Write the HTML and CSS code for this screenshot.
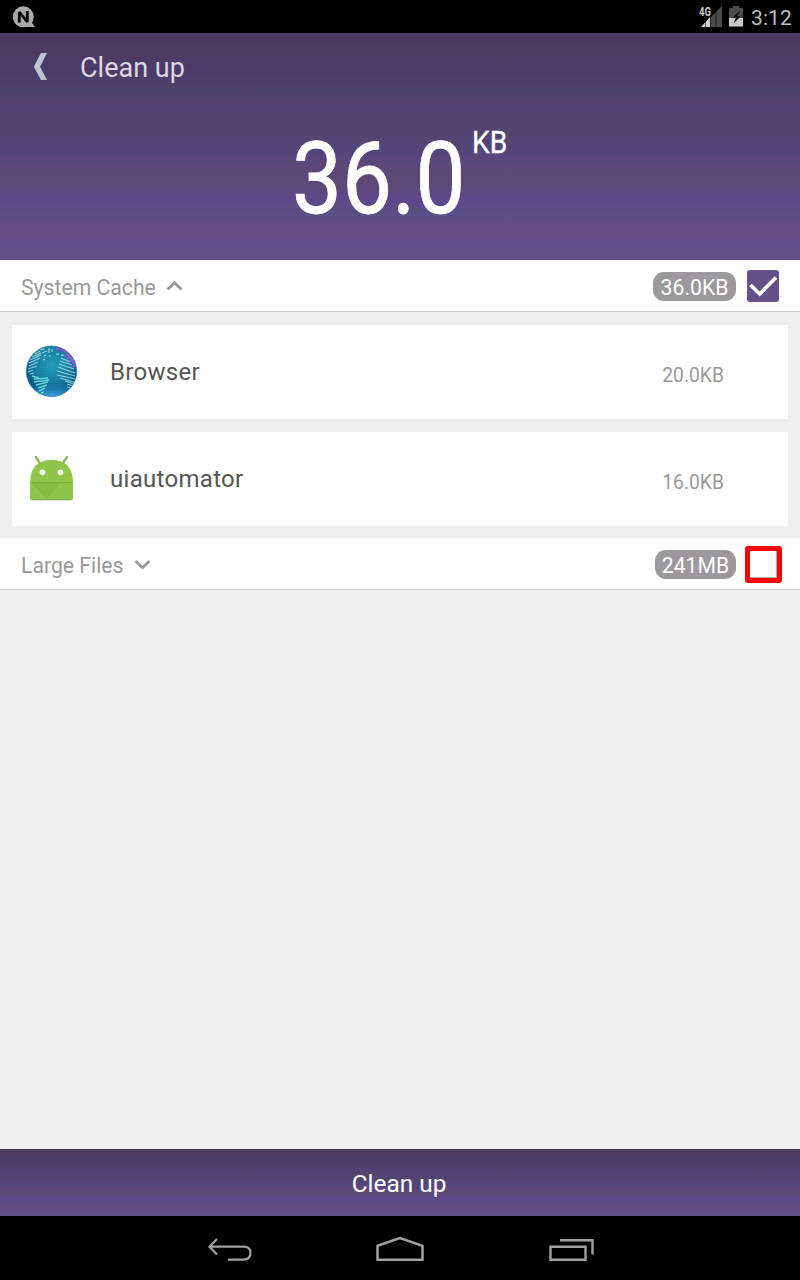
FILE: index.html
```html
<!DOCTYPE html>
<html lang="en">
<head>
<meta charset="utf-8">
<title>Clean up</title>
<link rel="stylesheet" href="styles.css">
</head>
<body>
<div class="screen">
  <div class="status">
    <svg class="notify" width="24" height="24" viewBox="0 0 24 24"><circle cx="11.300" cy="10.800" r="10.500" fill="#aaa"/><path d="M19 15.500l4 5.500H11z" fill="#aaa"/><path d="M7.300 16.500V6L15.300 16V5" fill="none" stroke="#000" stroke-width="2.800" stroke-linejoin="bevel"/></svg>
    <div class="status-right">
      <svg width="24" height="22" viewBox="0 0 24 22"><path d="M23 0v21h-21z" fill="#4b4d4b"/><path d="M11 11v10H2z" fill="#d0d0d0"/><path d="M6.500 12v9M11.500 8v13M17 4v17" stroke="#000" stroke-width=".6"/><path d="M0 0h13v10H0z" fill="#000"/><text class="net" x="0" y="10" textLength="12" lengthAdjust="spacingAndGlyphs">4G</text></svg>
      <svg class="battery" width="14" height="22" viewBox="0 0 14 22"><path d="M4 0h6v2h4v10H0V2h4z" fill="#4b4d4b"/><path d="M0 12h14v8.500H0z" fill="#c8c8c8"/><path d="M11.500 4L3.500 11.500h3.500L4.500 17.500 12 10H8.500z" fill="#111"/></svg>
      <span class="clock">3:12</span>
    </div>
  </div>
  <header class="header">
    <div class="title-bar">
      <svg width="14" height="28" viewBox="0 0 14 28"><path d="M8 0h6L7 13.700 14 27H8L.8 13.700z" fill="#bac5cd"/></svg>
      <h1 class="title">Clean up</h1>
    </div>
    <div class="total"><span class="amount">36.0</span><span class="unit">KB</span></div>
  </header>
  <section class="group">
    <span class="group-name">System Cache</span>
    <svg class="chevron" width="17" height="11" viewBox="0 0 17 11"><path d="M1.500 9.500L8.500 2.700 15.500 9.500" fill="none" stroke="#999" stroke-width="2.800"/></svg>
    <span class="badge badge-cache">36.0KB</span>
    <span class="check"><svg width="32" height="32" viewBox="0 0 32 32"><path d="M3.500 15L12.700 24 29 7.500" fill="none" stroke="#fff" stroke-width="3.600"/></svg></span>
  </section>
  <div class="items">
    <div class="item">
      <svg width="54" height="54" viewBox="0 0 54 54">
        <defs>
          <radialGradient id="globe" cx=".5" cy=".36" r=".64"><stop offset="0" stop-color="#269bb5"/><stop offset=".5" stop-color="#187ba1"/><stop offset=".82" stop-color="#09527d"/><stop offset="1" stop-color="#0b648f"/></radialGradient>
          <linearGradient id="shine" x1="0" y1="0" x2="0" y2="1"><stop offset=".72" stop-color="#2899d5" stop-opacity="0"/><stop offset=".95" stop-color="#39a9e4"/></linearGradient>
          <pattern id="dots" width="3" height="3" patternUnits="userSpaceOnUse"><circle cx="1" cy="1" r=".6" fill="#55b6d4" opacity=".35"/></pattern>
          <clipPath id="round"><circle cx="26.500" cy="26.300" r="25.200"/></clipPath>
        </defs>
        <g clip-path="url(#round)">
          <path d="M0 0h54v54H0z" fill="url(#globe)"/><path d="M0 35Q27 60 54 35L51 43Q27 60 5 43z" fill="#063b67" opacity=".6"/><path d="M0 0h54v54H0z" fill="url(#dots)"/><path d="M0 0h54v54H0z" fill="url(#shine)"/>
          <g fill="none" stroke="#a6dce9" stroke-width="1.250" opacity=".85"><path d="M10 9l5-3M7 12l9-4M5 15l11-5M4 18l11-5M4 21l9-4M3 24l9-3M3 27l5-2M5 29l4-1M15 5l5-1M17 8l5-2M19 11l2-1M24 3v5M27 4v3M25 10v2M18 15l2-1"/><path d="M36 13l9 4M35 16l12 4M34 19l15 5M33 22l17 6M32 26l18 5M32 30l18 4M35 33l14 4M40 36l9 3M42 39l6 2M42 42l4 1M31 9h3M36 10h3"/></g>
          <g fill="none" stroke="#65d4cf" stroke-width="1.400"><path d="M7 31l7 2M9 34l14-1M9 37l15-2M11 40l12-3M13 43l9-3M14 46l6-3M16 48l3-1"/></g>
          <path d="M31 3Q49 6 51 22" fill="none" stroke="#9349d5" stroke-width="3" opacity=".85"/><path d="M39 10l5 4M42 9l6 7M44 15l6 4M45 20l6 2" stroke="#9b61df" stroke-width="1.200"/>
        </g><circle cx="26.500" cy="26.300" r="25.200" fill="none" stroke="#287fae" stroke-width=".8"/>
      </svg>
      <span class="item-name">Browser</span><span class="size">20.0KB</span>
    </div>
    <div class="item">
      <svg width="54" height="54" viewBox="0 0 54 54"><path d="M10.800 5l4 6M42 5l-4 6" stroke="#89b35c" stroke-width="2.300" stroke-linecap="round"/><path d="M5.200 31Q5 8 26.500 8T48 31v14.500q0 2.500-2.500 2.500h-38q-2.500 0-2.500-2.500z" fill="#8fc549"/><path d="M5.500 30.500h42.300" stroke="#7dae40" stroke-width="1"/><path d="M6 31L22 47 36 31z" fill="#83b944" opacity=".7"/><path d="M5.500 47Q6 47.800 8 47.800h37q2 0 2.500-.8" fill="none" stroke="#79a546" stroke-width=".8"/><circle cx="17.500" cy="20.300" r="2.800" fill="#fff"/><circle cx="35.500" cy="20.300" r="2.800" fill="#fff"/></svg>
      <span class="item-name">uiautomator</span><span class="size">16.0KB</span>
    </div>
  </div>
  <section class="group">
    <span class="group-name">Large Files</span>
    <svg class="chevron" width="17" height="11" viewBox="0 0 17 11"><path d="M1.500 3L8.500 9.700 15.500 3" fill="none" stroke="#999" stroke-width="2.800"/></svg>
    <span class="badge badge-large">241MB</span>
    <span class="empty-check"></span>
  </section>
  <main class="blank"></main>
  <div class="action"><span class="action-text">Clean up</span></div>
  <nav class="nav">
    <svg width="46" height="28" viewBox="0 0 46 28" fill="none" stroke="#a0a0a0" stroke-width="2.300"><path d="M10 3L2.500 10.700 10 18.500M2.500 10.700h34q7 0 7 6.400t-7 6.500H21"/></svg>
    <svg width="50" height="28" viewBox="0 0 50 28" fill="none" stroke="#a0a0a0" stroke-width="2.500"><path d="M2.500 9.800L25 2.100 47.500 9.800v13.900h-45z"/></svg>
    <svg width="48" height="28" viewBox="0 0 48 28" fill="none" stroke="#a0a0a0" stroke-width="2.400"><path d="M3.500 10.700h35v13h-35zM13 4.200h32.500V18.500"/></svg>
  </nav>
</div>
</body>
</html>
```
FILE: styles.css
```css
* { box-sizing: border-box; }
body { margin: 0; font-family: Roboto, "Noto Sans", sans-serif; background: #eee; }
svg { display: block; flex: none; }
.screen { width: 800px; height: 1280px; display: flex; flex-direction: column; overflow: hidden; }
.status { height: 33px; background: #000; display: flex; padding: 6px 8px 0 12px; flex: none; }
.status-right { margin-left: auto; display: flex; }
.battery { margin-left: 6px; }
.clock { color: #bebebe; font-size: 21px; line-height: 24px; width: 41px; margin-left: 8px; letter-spacing: .1px; }
.net { font-size: 12px; font-weight: 700; fill: #c8c8c8; }
.header, .action { background: linear-gradient(#49395f, #4e3b62 8%, #4b3b6a 16%, #4b426b 25%, #554072 32%, #51456f 43%, #53467b 52%, #5e4778 59%, #5a4a77 67%, #5d4889 73%, #594e85 80%, #664c84 86%, #644c8d 92%, #64518a); flex: none; }
.header { height: 227px; }
.title-bar { display: flex; height: 68px; padding: 20px 0 0 33px; }
.title { margin: 0 0 0 33px; font-size: 27px; line-height: 30px; font-weight: 400; color: #dcd7e2; }
.total { display: flex; color: #fff; padding-left: 292px; height: 140px; }
.amount { font-size: 100px; line-height: 118px; width: 180px; padding-top: 19px; transform: scaleX(.89); transform-origin: left; -webkit-text-stroke: .8px #fff; }
.unit { font-size: 31px; line-height: 36px; padding-top: 24px; transform: scaleX(.91); transform-origin: left; -webkit-text-stroke: .3px #fff; }
.group { height: 52px; background: #fff; display: flex; align-items: center; padding: 0 21px; border-bottom: 1px solid #c9c9c9; flex: none; color: #999; font-size: 21.2px; }
.group-name { padding-top: 3px; white-space: nowrap; }
.chevron { margin-left: 10px; }
.badge { margin-left: auto; height: 29px; background: #9c999c; color: #fff; border-radius: 11px; line-height: 31px; text-align: center; margin-top: 2px; white-space: nowrap; }
.badge-cache { width: 83px; }
.badge-large { width: 81px; }
.check { width: 32px; height: 32px; margin-left: 11px; border-radius: 3px; background: #64518a; }
.empty-check { width: 37px; height: 37px; margin: 2px -3px 0 9px; border: 5px solid #f00; border-radius: 3px; background: #fff; box-shadow: inset -1px -1px #aaa; }
.items { height: 226px; padding: 13px 12px 12px; display: flex; flex-direction: column; gap: 13px; flex: none; }
.item { height: 94px; background: #fff; display: flex; align-items: center; padding: 0 64px 0 13px; }
.item-name { margin-left: 31px; color: #555; font-size: 24px; letter-spacing: .3px; }
.size { margin-left: auto; padding-top: 7px; color: #999; font-size: 19.3px; }
.blank { flex: 1; }
.action { height: 67px; color: #fff; font-size: 24.4px; display: flex; justify-content: center; align-items: center; }
.action-text { padding: 2px 2px 0 0; }
.nav { height: 64px; background: #000; display: flex; justify-content: space-between; padding: 20px 205px 0 207px; flex: none; }
```
